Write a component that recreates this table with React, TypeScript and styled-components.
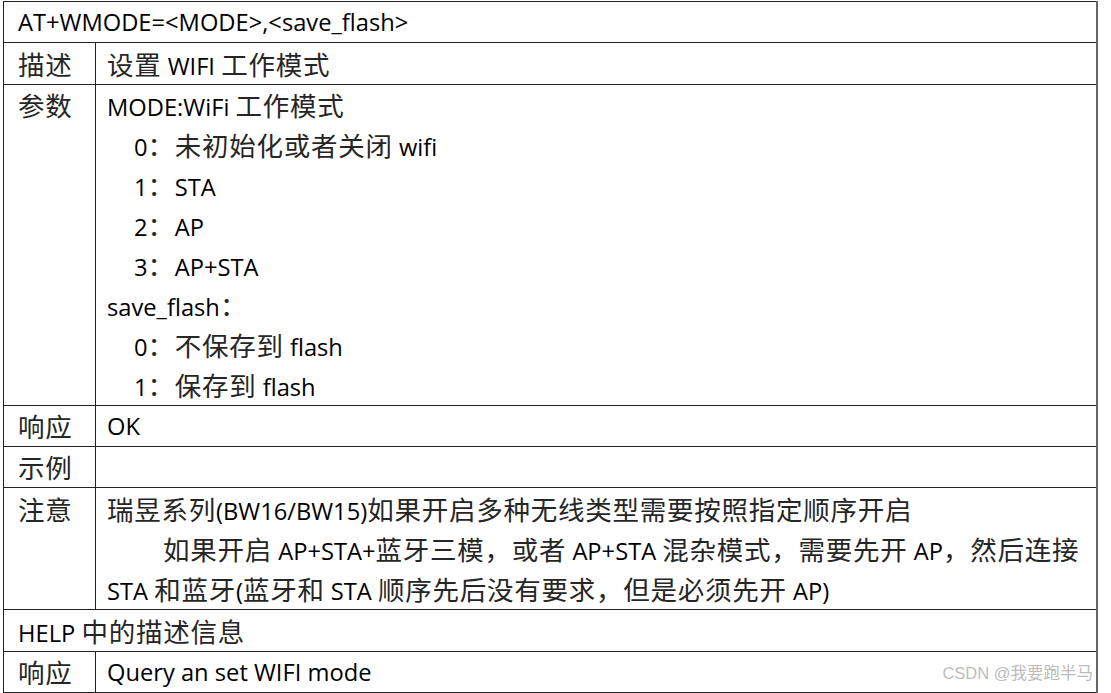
import React from "react";
import styled, { createGlobalStyle } from "styled-components";

const GlobalStyle = createGlobalStyle`
  html, body {
    margin: 0;
    padding: 0;
    background: #ffffff;
  }
`;

const Page = styled.div`
  position: relative;
  width: 1111px;
  height: 693px;
  padding: 1px 0 0 3px;
  box-sizing: border-box;
  background: #fff;
  overflow: hidden;
`;

const Table = styled.table`
  width: 1095px;
  border-collapse: collapse;
  table-layout: fixed;
  border-top: 1px solid #222;
  border-left: 1px solid #222;
  border-bottom: 1px solid #222;
  border-right: 2px solid #666;
  font-family: "Open Sans", "Noto Sans CJK SC", sans-serif;
  font-size: 23.7px;
  color: #000;
`;

const Col = styled.col<{ w?: number }>`
  width: ${({ w }) => (w ? `${w}px` : "auto")};
`;

const Cell = styled.td<{ pad?: number }>`
  border: 1px solid #222;
  padding: ${({ pad }) => pad || 0}px 0 0 11px;
  line-height: 40px;
  vertical-align: top;
  white-space: nowrap;
  overflow: hidden;
`;

const LabelCell = styled(Cell)`
  padding-left: 14px;
`;

const WideCell = styled(Cell)`
  padding-left: 14px;
`;

const Line = styled.div<{ indent?: number }>`
  height: 40px;
  padding-left: ${({ indent }) => indent || 0}px;
`;

const Han = styled.span`
  font-family: "Noto Sans CJK SC", sans-serif;
  font-size: 26.5px;
  font-weight: 400;
  letter-spacing: 0.75px;
  color: #262626;
`;

const Watermark = styled.div`
  position: absolute;
  right: 18px;
  top: 661px;
  font-family: "Liberation Sans", "Noto Sans CJK SC", sans-serif;
  font-size: 16.5px;
  line-height: 24px;
  color: #bcbcbc;
  white-space: nowrap;
`;

// wrap Chinese / full width runs so they get the wider CJK size
const mix = (text: string) =>
  text.split(/([\u3000-\u303f\u4e00-\u9fff\uff00-\uffef]+)/).map((part, i) =>
    /[\u3000-\u303f\u4e00-\u9fff\uff00-\uffef]/.test(part) ? (
      <Han key={i}>{part}</Han>
    ) : (
      <React.Fragment key={i}>{part}</React.Fragment>
    )
  );

const params: { text: string; indent?: number }[] = [
  { text: "MODE:WiFi 工作模式" },
  { text: "0：未初始化或者关闭 wifi", indent: 27 },
  { text: "1：STA", indent: 27 },
  { text: "2：AP", indent: 27 },
  { text: "3：AP+STA", indent: 27 },
  { text: "save_flash：" },
  { text: "0：不保存到 flash", indent: 27 },
  { text: "1：保存到 flash", indent: 27 },
];

const notes: { text: string; indent?: number }[] = [
  { text: "瑞昱系列(BW16/BW15)如果开启多种无线类型需要按照指定顺序开启" },
  { text: "如果开启 AP+STA+蓝牙三模，或者 AP+STA 混杂模式，需要先开 AP，然后连接", indent: 56 },
  { text: "STA 和蓝牙(蓝牙和 STA 顺序先后没有要求，但是必须先开 AP)" },
];

const App: React.FC = () => {
  return (
    <>
      <GlobalStyle />
      <Page>
        <Table>
          <colgroup>
            <Col w={92} />
            <Col />
          </colgroup>
          <tbody>
            <tr>
              <WideCell colSpan={2}>
                <Line>{mix("AT+WMODE=<MODE>,<save_flash>")}</Line>
              </WideCell>
            </tr>
            <tr>
              <LabelCell pad={1}>
                <Line>{mix("描述")}</Line>
              </LabelCell>
              <Cell pad={1}>
                <Line>{mix("设置 WIFI 工作模式")}</Line>
              </Cell>
            </tr>
            <tr>
              <LabelCell>
                <Line>{mix("参数")}</Line>
              </LabelCell>
              <Cell>
                {params.map((p) => (
                  <Line key={p.text} indent={p.indent}>
                    {mix(p.text)}
                  </Line>
                ))}
              </Cell>
            </tr>
            <tr>
              <LabelCell>
                <Line>{mix("响应")}</Line>
              </LabelCell>
              <Cell>
                <Line>OK</Line>
              </Cell>
            </tr>
            <tr>
              <LabelCell>
                <Line>{mix("示例")}</Line>
              </LabelCell>
              <Cell>
                <Line />
              </Cell>
            </tr>
            <tr>
              <LabelCell pad={1}>
                <Line>{mix("注意")}</Line>
              </LabelCell>
              <Cell pad={1}>
                {notes.map((n) => (
                  <Line key={n.text} indent={n.indent}>
                    {mix(n.text)}
                  </Line>
                ))}
              </Cell>
            </tr>
            <tr>
              <WideCell colSpan={2} pad={1}>
                <Line>{mix("HELP 中的描述信息")}</Line>
              </WideCell>
            </tr>
            <tr>
              <LabelCell>
                <Line>{mix("响应")}</Line>
              </LabelCell>
              <Cell>
                <Line>Query an set WIFI mode</Line>
              </Cell>
            </tr>
          </tbody>
        </Table>
        <Watermark>CSDN @我要跑半马</Watermark>
      </Page>
    </>
  );
};

export default App;
